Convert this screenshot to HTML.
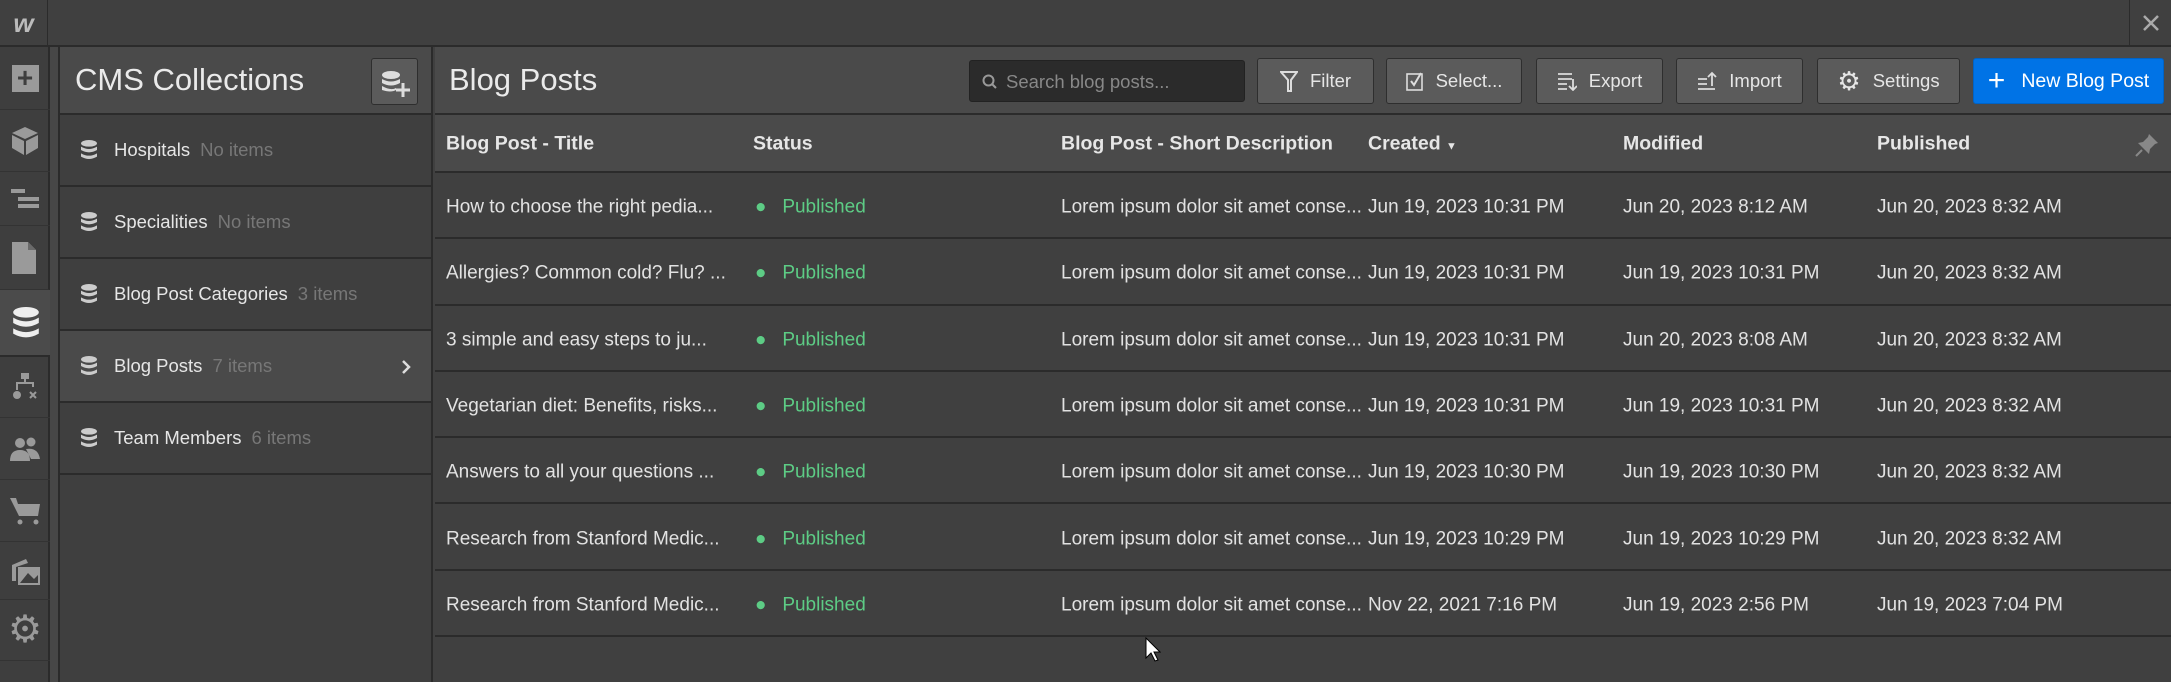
<!DOCTYPE html>
<html><head><style>
*{box-sizing:border-box;margin:0;padding:0}
body{width:2171px;height:682px;background:#404040;font-family:"Liberation Sans",sans-serif;color:#e6e6e6;position:relative;overflow:hidden}
.a{position:absolute}
.top{left:0;top:0;width:2171px;height:47px;background:#404040;border-bottom:2px solid #2b2b2b}
.strip{left:0;top:47px;width:50px;height:635px;background:#3e3e3e;border-right:2px solid #2b2b2b}
.gap{left:50px;top:47px;width:10px;height:635px;background:#474747;border-right:2px solid #2b2b2b}
.ico{left:0;width:50px;display:flex;align-items:center;justify-content:center;border-bottom:1px solid #333}
.panel{left:60px;top:47px;width:373px;height:635px;background:#3f3f3f;border-right:2px solid #2b2b2b}
.hdr{left:0;top:0;width:100%;height:68px;background:#4a4a4a;border-bottom:2px solid #2b2b2b}
.item{left:0;width:100%;height:72px;border-bottom:2px solid #2b2b2b;display:flex;align-items:center;padding-left:20px;font-size:18.5px}
.item .n{color:#777;margin-left:10px}
.db{width:18px;height:20px;margin-right:16px}
.main{left:435px;top:47px;width:1736px;height:635px}
.btn{top:11px;height:46px;background:#5b5b5b;border:1px solid #2e2e2e;border-radius:3px;display:flex;align-items:center;justify-content:center;font-size:18.5px;color:#e6e6e6;gap:12px}
.th{left:0;top:68px;width:100%;height:58px;background:#4a4a4a;border-bottom:2px solid #2b2b2b;font-weight:bold;font-size:19.5px}
.th span{position:absolute;top:50%;transform:translateY(-45%);white-space:nowrap}
.row span{position:absolute;top:50%;transform:translateY(-38%);white-space:nowrap}
.row{left:0;width:100%;height:66.3px;border-bottom:2px solid #2b2b2b;font-size:19px;color:#e2e2e2}
.g{color:#5dcc85}
</style></head><body>
<div class="a top">
 <div class="a" style="left:0;top:0;width:48px;height:47px;border-right:1px solid #2b2b2b;font:italic bold 26px 'Liberation Sans';color:#bbb;display:flex;align-items:center;justify-content:center">w</div>
 <div class="a" style="left:2129px;top:0;width:1px;height:47px;background:#2b2b2b"></div>
 <svg class="a" style="left:2142px;top:14px" width="18" height="18"><path d="M2 2L16 16M16 2L2 16" stroke="#aaa" stroke-width="2.5"/></svg>
</div>
<div class="a strip">
 <div class="a ico" style="top:0;height:63px"><div style="width:27px;height:27px;background:#9a9a9a;color:#3e3e3e;font-size:28px;line-height:26px;text-align:center;font-weight:bold">+</div></div>
 <div class="a ico" style="top:63px;height:62px"><svg width="28" height="30"><path d="M14 1L27 7L14 13L1 7Z M1 9L13 15V29L1 22Z M27 9L15 15V29L27 22Z" fill="#9a9a9a"/></svg></div>
 <div class="a ico" style="top:125px;height:54px"><svg width="28" height="20"><rect x="0" y="0" width="14" height="4" fill="#9a9a9a"/><rect x="7" y="8" width="21" height="4" fill="#9a9a9a"/><rect x="7" y="15" width="21" height="4" fill="#9a9a9a"/></svg></div>
 <div class="a ico" style="top:179px;height:64px;border-right:2px solid #2b2b2b"><svg width="24" height="32"><path d="M0 0H16L24 8V32H0Z" fill="#9a9a9a"/><path d="M16 0V8H24" fill="#6a6a6a"/></svg></div>
 <div class="a ico" style="top:243px;height:67px;background:#4b4b4b;width:52px;border-bottom:2px solid #2b2b2b"><svg width="28" height="32" viewBox="0 0 26 30"><ellipse cx="13" cy="5" rx="12" ry="5" fill="#eee"/><path d="M1 10Q13 17 25 10V15Q13 22 1 15Z M1 20Q13 27 25 20V25Q13 32 1 25Z" fill="#eee"/></svg></div>
 <div class="a ico" style="top:310px;height:61px"><svg width="26" height="28"><rect x="9" y="0" width="8" height="6" fill="#9a9a9a"/><path d="M13 6V10M5 17V10H21V14" stroke="#9a9a9a" stroke-width="2" fill="none"/><circle cx="5" cy="22" r="4" fill="#9a9a9a"/><path d="M18 19L24 25M24 19L18 25" stroke="#9a9a9a" stroke-width="2"/></svg></div>
 <div class="a ico" style="top:371px;height:62px"><svg width="30" height="24"><circle cx="10" cy="6" r="5" fill="#9a9a9a"/><circle cx="21" cy="5" r="4.5" fill="#9a9a9a"/><path d="M0 24Q0 13 10 13Q20 13 20 24Z M16 12Q28 10 30 22H21Z" fill="#9a9a9a"/></svg></div>
 <div class="a ico" style="top:433px;height:62px"><svg width="30" height="30"><path d="M0 2H6L8 8H30L28 20H9Z" fill="#9a9a9a"/><circle cx="10" cy="26" r="2.5" fill="#9a9a9a"/><circle cx="26" cy="26" r="2.5" fill="#9a9a9a"/></svg></div>
 <div class="a ico" style="top:495px;height:58px"><svg width="30" height="28"><path d="M2 8L16 2L18 6L6 10V24H2Z" fill="#9a9a9a"/><rect x="8" y="10" width="22" height="18" fill="#9a9a9a"/><path d="M10 26L18 16L24 22L28 18V26Z" fill="#3e3e3e"/></svg></div>
 <div class="a ico" style="top:553px;height:61px"><span style="font-size:38px;color:#9a9a9a;line-height:1">⚙</span></div>
</div>
<div class="a gap"></div>
<div class="a panel">
 <div class="a hdr"><div class="a" style="left:15px;top:15px;font-size:31px;color:#eaeaea">CMS Collections</div>
 <div class="a" style="left:311px;top:11px;width:47px;height:47px;background:#5b5b5b;border:1px solid #2e2e2e;border-radius:3px"><svg class="a" style="left:9px;top:12px" width="30" height="26"><ellipse cx="10" cy="4" rx="9" ry="4" fill="#ddd"/><path d="M1 8Q10 13 19 8V12Q10 17 1 12Z M1 15Q10 20 15 17V19Q10 22 1 19Z" fill="#ddd"/><path d="M22 12V26M15 19H29" stroke="#ddd" stroke-width="3"/></svg></div></div>
 <div class="a item" style="top:68px"><svg class="db" viewBox="0 0 26 30"><ellipse cx="13" cy="5" rx="12" ry="5" fill="#ccc"/><path d="M1 10Q13 17 25 10V15Q13 22 1 15Z M1 20Q13 27 25 20V25Q13 32 1 25Z" fill="#ccc"/></svg>Hospitals<span class="n">No items</span></div>
 <div class="a item" style="top:140px"><svg class="db" viewBox="0 0 26 30"><ellipse cx="13" cy="5" rx="12" ry="5" fill="#ccc"/><path d="M1 10Q13 17 25 10V15Q13 22 1 15Z M1 20Q13 27 25 20V25Q13 32 1 25Z" fill="#ccc"/></svg>Specialities<span class="n">No items</span></div>
 <div class="a item" style="top:212px"><svg class="db" viewBox="0 0 26 30"><ellipse cx="13" cy="5" rx="12" ry="5" fill="#ccc"/><path d="M1 10Q13 17 25 10V15Q13 22 1 15Z M1 20Q13 27 25 20V25Q13 32 1 25Z" fill="#ccc"/></svg>Blog Post Categories<span class="n">3 items</span></div>
 <div class="a item" style="top:284px;background:#4a4a4a"><svg class="db" viewBox="0 0 26 30"><ellipse cx="13" cy="5" rx="12" ry="5" fill="#ccc"/><path d="M1 10Q13 17 25 10V15Q13 22 1 15Z M1 20Q13 27 25 20V25Q13 32 1 25Z" fill="#ccc"/></svg>Blog Posts<span class="n">7 items</span><svg class="a" style="left:341px;top:28px" width="10" height="16"><path d="M2 2L8 8L2 14" stroke="#ddd" stroke-width="2.5" fill="none"/></svg></div>
 <div class="a item" style="top:356px"><svg class="db" viewBox="0 0 26 30"><ellipse cx="13" cy="5" rx="12" ry="5" fill="#ccc"/><path d="M1 10Q13 17 25 10V15Q13 22 1 15Z M1 20Q13 27 25 20V25Q13 32 1 25Z" fill="#ccc"/></svg>Team Members<span class="n">6 items</span></div>
</div>
<div class="a main">
 <div class="a hdr" style="width:1736px">
  <div class="a" style="left:14px;top:15px;font-size:31px;color:#eaeaea">Blog Posts</div>
  <div class="a" style="left:534px;top:13px;width:276px;height:42px;background:#2b2b2b;border:1px solid #222;border-radius:3px;font-size:18.5px;color:#888;padding:10px 0 0 36px">Search blog posts...<svg class="a" style="left:12px;top:13px" width="16" height="16"><circle cx="6.5" cy="6.5" r="5" stroke="#999" stroke-width="2" fill="none"/><path d="M10 10L14 14" stroke="#999" stroke-width="2"/></svg></div>
  <div class="a btn" style="left:822px;width:117px"><svg width="18" height="22"><path d="M1 2H17L11 10V21L8 21V10Z" fill="none" stroke="#ddd" stroke-width="2"/></svg>Filter</div>
  <div class="a btn" style="left:951px;width:136px"><svg width="18" height="20"><rect x="1" y="3" width="15" height="16" fill="none" stroke="#ddd" stroke-width="1.6"/><path d="M5 10L8 14L15 2" stroke="#ddd" stroke-width="2" fill="none"/></svg>Select...</div>
  <div class="a btn" style="left:1101px;width:127px"><svg width="20" height="20"><path d="M1 3H15M1 8H15M1 13H10M1 18H10" stroke="#ddd" stroke-width="1.8"/><path d="M16 8V19M12 15L16 19L20 15" stroke="#ddd" stroke-width="1.8" fill="none"/></svg>Export</div>
  <div class="a btn" style="left:1241px;width:127px"><svg width="20" height="20"><path d="M1 8H10M1 13H10M1 18H18" stroke="#ddd" stroke-width="1.8"/><path d="M15 15V2M11 6L15 2L19 6" stroke="#ddd" stroke-width="1.8" fill="none"/></svg>Import</div>
  <div class="a btn" style="left:1382px;width:143px"><span style="font-size:26px;line-height:1">⚙</span>Settings</div>
  <div class="a btn" style="left:1538px;width:191px;background:#0073e6;border-color:#0063c6;color:#fff;font-size:19.5px;gap:16px"><span style="font-size:30px;line-height:1;font-weight:300">+</span>New Blog Post</div>
 </div>
 <div class="a th"><span style="left:11px">Blog Post - Title</span><span style="left:318px">Status</span><span style="left:626px">Blog Post - Short Description</span><span style="left:933px">Created <small style="font-size:11px">▼</small></span><span style="left:1188px">Modified</span><span style="left:1442px">Published</span>
 <svg class="a" style="left:1700px;top:18px" width="24" height="24"><path d="M14 1L23 10L20 11L15 16L14 21L3 10L8 9L13 4Z" fill="#888"/><path d="M7 17L1 23" stroke="#888" stroke-width="2"/></svg></div>
 <div class="a" style="left:0;top:126px;width:100%">
  <div class="a row" style="top:0"><span style="left:11px">How to choose the right pedia...</span><span class="g" style="left:320px">●&nbsp;&nbsp;&nbsp;Published</span><span style="left:626px">Lorem ipsum dolor sit amet conse...</span><span style="left:933px">Jun 19, 2023 10:31 PM</span><span style="left:1188px">Jun 20, 2023 8:12 AM</span><span style="left:1442px">Jun 20, 2023 8:32 AM</span></div>
  <div class="a row" style="top:66.3px"><span style="left:11px">Allergies? Common cold? Flu? ...</span><span class="g" style="left:320px">●&nbsp;&nbsp;&nbsp;Published</span><span style="left:626px">Lorem ipsum dolor sit amet conse...</span><span style="left:933px">Jun 19, 2023 10:31 PM</span><span style="left:1188px">Jun 19, 2023 10:31 PM</span><span style="left:1442px">Jun 20, 2023 8:32 AM</span></div>
  <div class="a row" style="top:132.6px"><span style="left:11px">3 simple and easy steps to ju...</span><span class="g" style="left:320px">●&nbsp;&nbsp;&nbsp;Published</span><span style="left:626px">Lorem ipsum dolor sit amet conse...</span><span style="left:933px">Jun 19, 2023 10:31 PM</span><span style="left:1188px">Jun 20, 2023 8:08 AM</span><span style="left:1442px">Jun 20, 2023 8:32 AM</span></div>
  <div class="a row" style="top:198.9px"><span style="left:11px">Vegetarian diet: Benefits, risks...</span><span class="g" style="left:320px">●&nbsp;&nbsp;&nbsp;Published</span><span style="left:626px">Lorem ipsum dolor sit amet conse...</span><span style="left:933px">Jun 19, 2023 10:31 PM</span><span style="left:1188px">Jun 19, 2023 10:31 PM</span><span style="left:1442px">Jun 20, 2023 8:32 AM</span></div>
  <div class="a row" style="top:265.2px"><span style="left:11px">Answers to all your questions ...</span><span class="g" style="left:320px">●&nbsp;&nbsp;&nbsp;Published</span><span style="left:626px">Lorem ipsum dolor sit amet conse...</span><span style="left:933px">Jun 19, 2023 10:30 PM</span><span style="left:1188px">Jun 19, 2023 10:30 PM</span><span style="left:1442px">Jun 20, 2023 8:32 AM</span></div>
  <div class="a row" style="top:331.5px"><span style="left:11px">Research from Stanford Medic...</span><span class="g" style="left:320px">●&nbsp;&nbsp;&nbsp;Published</span><span style="left:626px">Lorem ipsum dolor sit amet conse...</span><span style="left:933px">Jun 19, 2023 10:29 PM</span><span style="left:1188px">Jun 19, 2023 10:29 PM</span><span style="left:1442px">Jun 20, 2023 8:32 AM</span></div>
  <div class="a row" style="top:397.8px"><span style="left:11px">Research from Stanford Medic...</span><span class="g" style="left:320px">●&nbsp;&nbsp;&nbsp;Published</span><span style="left:626px">Lorem ipsum dolor sit amet conse...</span><span style="left:933px">Nov 22, 2021 7:16 PM</span><span style="left:1188px">Jun 19, 2023 2:56 PM</span><span style="left:1442px">Jun 19, 2023 7:04 PM</span></div>
 </div>
 <svg class="a" style="left:710px;top:590px" width="16" height="26"><path d="M1 1V21L6 16L10 24L13 23L9 15H15Z" fill="#fff" stroke="#000" stroke-width="1"/></svg>
</div>
</body></html>
